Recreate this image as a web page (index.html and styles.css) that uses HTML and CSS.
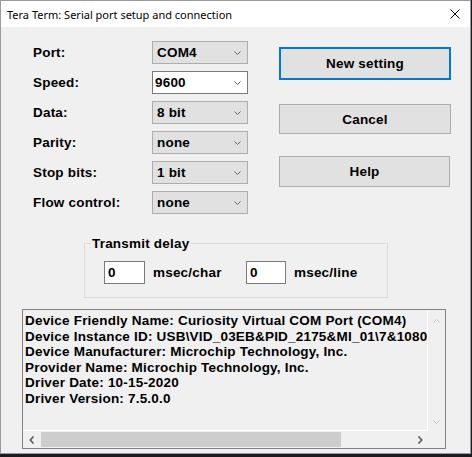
FILE: index.html
```html
<!DOCTYPE html>
<html>
<head>
<meta charset="utf-8">
<title>Tera Term: Serial port setup and connection</title>
<link rel="stylesheet" href="styles.css">
</head>
<body>
<div class="window">
  <div class="titlebar">
    <span class="title">Tera Term: Serial port setup and connection</span>
    <svg class="close" width="10" height="10" viewBox="0 0 10 10"><path d="M0.5 0.5 L9.5 9.5 M9.5 0.5 L0.5 9.5" stroke="#000" stroke-width="1" fill="none"/></svg>
  </div>
  <div class="content">
    <div class="top">
      <div class="form">
        <span class="lbl">Port:</span>
        <div class="combo"><span>COM4</span><svg class="chev" width="7" height="4" viewBox="0 0 7 4"><polyline points="0.5,0.5 3.5,3.5 6.5,0.5" fill="none" stroke="#606060" stroke-width="1"/></svg></div>
        <span class="lbl">Speed:</span>
        <div class="combo combo-edit"><span>9600</span><svg class="chev" width="7" height="4" viewBox="0 0 7 4"><polyline points="0.5,0.5 3.5,3.5 6.5,0.5" fill="none" stroke="#606060" stroke-width="1"/></svg></div>
        <span class="lbl">Data:</span>
        <div class="combo"><span>8 bit</span><svg class="chev" width="7" height="4" viewBox="0 0 7 4"><polyline points="0.5,0.5 3.5,3.5 6.5,0.5" fill="none" stroke="#606060" stroke-width="1"/></svg></div>
        <span class="lbl">Parity:</span>
        <div class="combo"><span>none</span><svg class="chev" width="7" height="4" viewBox="0 0 7 4"><polyline points="0.5,0.5 3.5,3.5 6.5,0.5" fill="none" stroke="#606060" stroke-width="1"/></svg></div>
        <span class="lbl">Stop bits:</span>
        <div class="combo"><span>1 bit</span><svg class="chev" width="7" height="4" viewBox="0 0 7 4"><polyline points="0.5,0.5 3.5,3.5 6.5,0.5" fill="none" stroke="#606060" stroke-width="1"/></svg></div>
        <span class="lbl">Flow control:</span>
        <div class="combo"><span>none</span><svg class="chev" width="7" height="4" viewBox="0 0 7 4"><polyline points="0.5,0.5 3.5,3.5 6.5,0.5" fill="none" stroke="#606060" stroke-width="1"/></svg></div>
      </div>
      <div class="buttons">
        <button class="btn btn-default">New setting</button>
        <button class="btn btn-cancel">Cancel</button>
        <button class="btn btn-help">Help</button>
      </div>
    </div>
    <fieldset class="delay">
      <legend>Transmit delay</legend>
      <div class="delay-row">
        <div class="field">0</div><span class="unit">msec/char</span>
        <div class="field">0</div><span class="unit">msec/line</span>
      </div>
    </fieldset>
    <div class="info">
      <div class="info-text">
        <div>Device Friendly Name: Curiosity Virtual COM Port (COM4)</div>
        <div>Device Instance ID: USB\VID_03EB&amp;PID_2175&amp;MI_01\7&amp;1080</div>
        <div>Device Manufacturer: Microchip Technology, Inc.</div>
        <div>Provider Name: Microchip Technology, Inc.</div>
        <div>Driver Date: 10-15-2020</div>
        <div>Driver Version: 7.5.0.0</div>
      </div>
      <div class="vscroll">
        <svg class="varrow-up" width="7" height="4" viewBox="0 0 7 4"><polyline points="0.5,3.5 3.5,0.5 6.5,3.5" fill="none" stroke="#c2c2c2" stroke-width="1"/></svg>
        <svg class="varrow-down" width="7" height="4" viewBox="0 0 7 4"><polyline points="0.5,0.5 3.5,3.5 6.5,0.5" fill="none" stroke="#c2c2c2" stroke-width="1"/></svg>
      </div>
      <div class="hscroll">
        <div class="harrow"><svg width="6" height="8" viewBox="0 0 6 8"><polyline points="4.5,0.5 1.3,4 4.5,7.5" fill="none" stroke="#606060" stroke-width="1.7"/></svg></div>
        <div class="thumb"></div>
        <div class="hspace"></div>
        <div class="harrow"><svg width="6" height="8" viewBox="0 0 6 8"><polyline points="1.5,0.5 4.7,4 1.5,7.5" fill="none" stroke="#606060" stroke-width="1.7"/></svg></div>
      </div>
      <div class="corner"></div>
    </div>
  </div>
</div>
</body>
</html>
```
FILE: styles.css
```css
html, body {
  margin: 0;
  padding: 0;
}
body {
  background: #1c1a21;
  width: 472px;
  height: 457px;
  overflow: hidden;
  font-family: "Liberation Sans", Arial, sans-serif;
}
.window {
  width: 471px;
  height: 454px;
  box-sizing: border-box;
  border: 1px solid #9a9a9a;
  background: #f0f0f0;
  display: flex;
  flex-direction: column;
}
.titlebar {
  height: 26px;
  flex: none;
  background: #fff;
  display: flex;
  align-items: center;
  justify-content: space-between;
  padding: 0 10px 0 6px;
}
.title {
  font-family: "Noto Sans", sans-serif;
  font-size: 11px;
  color: #000;
}
.close {
  display: block;
}
.content {
  padding-top: 14px;
  font-family: "Liberation Sans", Arial, sans-serif;
  font-weight: bold;
  font-size: 13.5px;
  letter-spacing: 0.2px;
  color: #000;
}
.top {
  display: flex;
  padding-left: 32px;
}
.form {
  display: grid;
  grid-template-columns: 119px 96px;
  grid-auto-rows: 23px;
  row-gap: 7px;
  align-items: center;
}
.combo {
  height: 23px;
  box-sizing: border-box;
  border: 1px solid #adadad;
  background: #e1e1e1;
  display: flex;
  align-items: center;
  justify-content: space-between;
  padding: 0 6px 0 4px;
}
.combo-edit {
  background: #fff;
  border-color: #7a7a7a;
  padding-left: 2px;
}
.chev {
  display: block;
  margin-top: 1px;
}
.buttons {
  margin-left: 31px;
  padding-top: 6px;
  display: flex;
  flex-direction: column;
  align-items: flex-start;
}
.btn {
  width: 172px;
  box-sizing: border-box;
  margin: 0;
  padding: 0;
  border: 1px solid #adadad;
  background: #e1e1e1;
  font: inherit;
  letter-spacing: inherit;
  color: #000;
}
.btn-default {
  height: 33px;
  border: 2px solid #0078d7;
}
.btn-cancel {
  height: 30px;
  margin-top: 24px;
}
.btn-help {
  height: 31px;
  width: 171px;
  margin-top: 22px;
}
.delay {
  margin: 22px 0 0 83px;
  width: 304px;
  box-sizing: border-box;
  border: 1px solid #dcdcdc;
  padding: 10px 0 13px 0;
  min-width: 0;
}
.delay legend {
  margin-left: 6px;
  padding: 0 1px;
  line-height: 15px;
}
.delay-row {
  display: grid;
  grid-template-columns: 41px 101px 40px auto;
  align-items: center;
  padding-left: 19px;
}
.field {
  height: 23px;
  box-sizing: border-box;
  border: 1px solid #7a7a7a;
  background: #fff;
  padding-left: 3px;
  line-height: 21px;
}
.unit {
  padding-left: 8px;
}
.info {
  margin: 11px 0 0 21px;
  width: 424px;
  height: 140px;
  box-sizing: border-box;
  border: 1px solid #828282;
  display: grid;
  grid-template-columns: 1fr 17px;
  grid-template-rows: 1fr 17px;
  background: #f0f0f0;
}
.info-text {
  border-right: 1px solid #fff;
  border-bottom: 1px solid #fff;
  padding: 3px 0 0 2px;
  line-height: 15.6px;
  overflow: hidden;
  white-space: nowrap;
}
.vscroll {
  display: flex;
  flex-direction: column;
  justify-content: space-between;
  align-items: center;
  padding: 9px 0 7px 0;
}
.vscroll svg {
  display: block;
}
.hscroll {
  display: flex;
  align-items: center;
}
.harrow {
  width: 17px;
  height: 17px;
  display: flex;
  align-items: center;
  justify-content: center;
  flex: none;
}
.harrow svg {
  display: block;
}
.thumb {
  width: 300px;
  height: 15px;
  margin-left: 1px;
  background: #cdcdcd;
  flex: none;
}
.hspace {
  flex: 1;
}
.corner {
  background: #f0f0f0;
}
```
